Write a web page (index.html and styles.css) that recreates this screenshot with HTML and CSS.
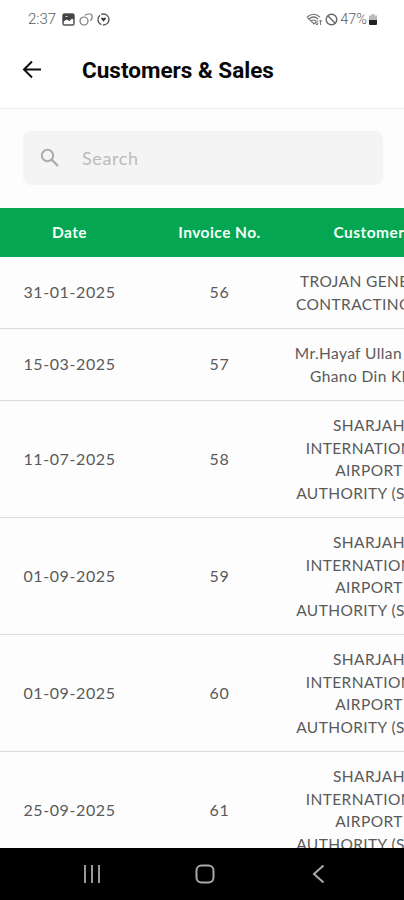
FILE: index.html
```
<!DOCTYPE html>
<html lang="en">
<head>
  <meta charset="UTF-8">
  <meta name="viewport" content="width=device-width, initial-scale=1.0">
  <title>Customers &amp; Sales</title>
  <link rel="stylesheet" href="styles.css">
</head>
<body>
  <div class="screen">
    <div class="status-bar">
      <span class="clock">2:37</span>
      <svg class="status-icon" width="13" height="13" viewBox="0 0 13 13" fill="none" stroke="#555">
        <rect x="1" y="1" width="11" height="11" rx="1.500" stroke-width="1.500"/>
        <path d="M1 1h11v6L10 5.500 7.500 8 4.500 6.500 1 9z" fill="#444" stroke="none"/>
        <path d="M3.500 3.500h2" stroke="#ddd"/>
      </svg>
      <svg class="status-icon" width="14" height="13" viewBox="0 0 14 13" fill="none" stroke="#777" stroke-width="1.200">
        <circle cx="5" cy="8" r="4"/>
        <path d="M6 2.500Q7 1 9 1h2q2 0 2 2v2q0 2-2 2.500"/>
      </svg>
      <svg class="status-icon" width="13" height="13" viewBox="0 0 13 13" fill="none" stroke="#555" stroke-width="1.300">
        <circle cx="6.500" cy="6.500" r="5.500" stroke-dasharray="9 1.500 11 1.500 11 1"/>
        <path d="M4 5.500l1-1 1.500.8 1.500-.8 1 1-2.500 3.200z" fill="#333" stroke="none"/>
      </svg>
      <div class="status-right">
        <svg width="17" height="13" viewBox="0 0 17 13" fill="none" stroke="#777" stroke-width="1.200">
          <path d="M1 4Q7.500-1.500 14 4M3 6q4.500-4 9 0M5 8q2.500-2 5 0M1 4l7 7 2-2"/>
          <path d="M11 7v5M9.500 10.500L11 12l1.500-1.500M14.500 12V7M13 8.500L14.500 7 16 8.500" stroke-width="1"/>
        </svg>
        <svg width="13" height="13" viewBox="0 0 13 13" fill="none" stroke="#666" stroke-width="1.400">
          <circle cx="6.500" cy="6.500" r="5.300"/>
          <path d="M2.800 2.800l7.400 7.400"/>
        </svg>
        <span class="percent">47%</span>
        <svg width="8" height="13" viewBox="0 0 8 13">
          <path d="M2.500 1h3v1.500H8V7H0V2.500h2.500z" fill="#bbb"/>
          <path d="M0 7h8v4q0 1-1 1H1q-1 0-1-1z" fill="#222"/>
        </svg>
      </div>
    </div>

    <div class="app-bar">
      <svg class="back" width="20" height="20" viewBox="0 0 20 20" fill="none" stroke="#111" stroke-width="2">
        <path d="M10 1.500L2 9.500l8 8M2 9.500h17"/>
      </svg>
      <h1>Customers &amp; Sales</h1>
    </div>

    <div class="content">
      <div class="search">
        <svg width="20" height="20" viewBox="0 0 20 20" fill="none" stroke="#a9abb0" stroke-width="2">
          <circle cx="7.500" cy="7.500" r="5.700"/>
          <path d="M11.500 11.500l6.500 6.500" stroke-width="2.400"/>
        </svg>
        <span>Search</span>
      </div>

      <div class="table">
        <div class="row head">
          <div>Date</div>
          <div>Invoice No.</div>
          <div>Customer</div>
        </div>
        <div class="row">
          <div>31-01-2025</div>
          <div>56</div>
          <div class="name">TROJAN GENERAL<br>CONTRACTING LLC</div>
        </div>
        <div class="row">
          <div>15-03-2025</div>
          <div>57</div>
          <div class="name">Mr.Hayaf Ullan Khan<br>Ghano Din Khan</div>
        </div>
        <div class="row">
          <div>11-07-2025</div>
          <div>58</div>
          <div class="name">SHARJAH<br>INTERNATIONAL<br>AIRPORT<br>AUTHORITY (SAAA)</div>
        </div>
        <div class="row">
          <div>01-09-2025</div>
          <div>59</div>
          <div class="name">SHARJAH<br>INTERNATIONAL<br>AIRPORT<br>AUTHORITY (SAAA)</div>
        </div>
        <div class="row">
          <div>01-09-2025</div>
          <div>60</div>
          <div class="name">SHARJAH<br>INTERNATIONAL<br>AIRPORT<br>AUTHORITY (SAAA)</div>
        </div>
        <div class="row">
          <div>25-09-2025</div>
          <div>61</div>
          <div class="name">SHARJAH<br>INTERNATIONAL<br>AIRPORT<br>AUTHORITY (SAAA)</div>
        </div>
      </div>
    </div>

    <div class="nav-bar">
      <svg width="20" height="20" viewBox="0 0 20 20" stroke="#999" stroke-width="2">
        <path d="M4 1v18M11 1v18M18 1v18"/>
      </svg>
      <svg width="20" height="20" viewBox="0 0 20 20" fill="none" stroke="#aaa" stroke-width="2">
        <rect x="1.500" y="1.500" width="17" height="17" rx="5"/>
      </svg>
      <svg width="20" height="20" viewBox="0 0 20 20" fill="none" stroke="#aaa" stroke-width="2">
        <path d="M14.500 1.500L5 10l9.500 8.500"/>
      </svg>
    </div>
  </div>
</body>
</html>
```
FILE: styles.css
```
* {
  box-sizing: border-box;
}

body {
  margin: 0;
  font-family: Lato, sans-serif;
  background: #fdfdfd;
  color: #5a5a5a;
}

.screen {
  display: flex;
  flex-direction: column;
  width: 404px;
  height: 900px;
  overflow: hidden;
}

.status-bar {
  display: flex;
  align-items: center;
  height: 38px;
  padding: 0 27px 0 28px;
  background: #fff;
  font-family: Roboto, sans-serif;
  font-size: 15px;
  font-weight: 300;
}

.clock {
  width: 34px;
}

.status-icon {
  margin-right: 4px;
}

.status-right {
  display: flex;
  align-items: center;
  gap: 2px;
  margin-left: auto;
}

.percent {
  font-size: 14.5px;
}

.app-bar {
  display: flex;
  align-items: center;
  flex-shrink: 0;
  height: 71px;
  padding: 0 0 7px 22px;
  background: #fff;
  border-bottom: 1px solid #eee;
}

.app-bar h1 {
  margin: 0 0 0 40px;
  font-family: Roboto, sans-serif;
  font-size: 22.5px;
  font-weight: 700;
  color: #080808;
}

.content {
  flex: 1;
  min-height: 0;
  overflow: hidden;
}

.search {
  display: flex;
  align-items: center;
  gap: 22px;
  height: 54px;
  margin: 22px 21px 23px 23px;
  padding: 0 17px;
  border-radius: 8px;
  background: #f4f4f5;
  font-size: 18px;
  letter-spacing: 0.6px;
  color: #bbb;
}

.row {
  display: grid;
  grid-template-columns: 139px 161px 138px;
  align-items: center;
  justify-items: center;
  width: 438px;
  padding: 13px 0;
  border-bottom: 1px solid #dcdcdc;
  font-size: 16px;
  line-height: 22.5px;
  letter-spacing: 0.6px;
  text-align: center;
  white-space: nowrap;
}

.name {
  font-size: 15.5px;
  letter-spacing: 0.4px;
}

.head {
  height: 49px;
  border-bottom: none;
  background: #04a651;
  color: #f4fff8;
  font-size: 15.5px;
  font-weight: 700;
  letter-spacing: 0.45px;
}

.nav-bar {
  display: flex;
  align-items: center;
  justify-content: center;
  gap: 94px;
  flex-shrink: 0;
  height: 52px;
  padding-left: 6px;
  background: #000;
}
```
